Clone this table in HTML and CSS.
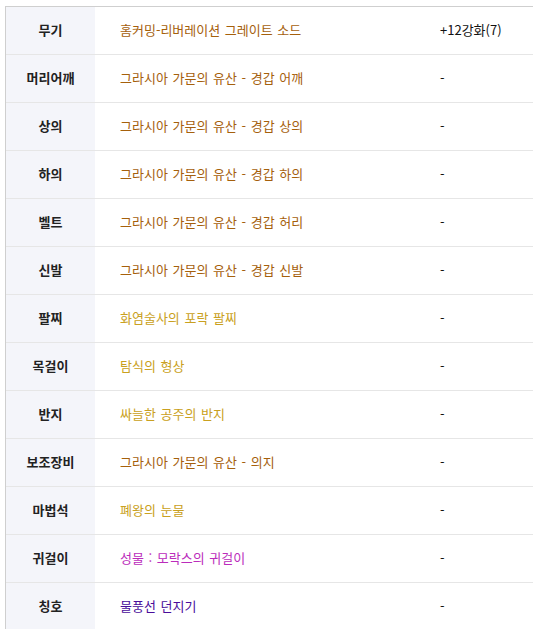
FILE: index.html
```html
<!DOCTYPE html>
<html lang="ko">
<head>
<meta charset="utf-8">
<link rel="stylesheet" href="styles.css">
</head>
<body>
<div class="equip">
  <div class="row"><div class="label">무기</div><div class="item brown">홈커밍-리버레이션 그레이트 소드</div><div class="enh">+12강화(7)</div></div>
  <div class="row"><div class="label">머리어깨</div><div class="item brown">그라시아 가문의 유산 - 경갑 어깨</div><div class="enh">-</div></div>
  <div class="row"><div class="label">상의</div><div class="item brown">그라시아 가문의 유산 - 경갑 상의</div><div class="enh">-</div></div>
  <div class="row"><div class="label">하의</div><div class="item brown">그라시아 가문의 유산 - 경갑 하의</div><div class="enh">-</div></div>
  <div class="row"><div class="label">벨트</div><div class="item brown">그라시아 가문의 유산 - 경갑 허리</div><div class="enh">-</div></div>
  <div class="row"><div class="label">신발</div><div class="item brown">그라시아 가문의 유산 - 경갑 신발</div><div class="enh">-</div></div>
  <div class="row"><div class="label">팔찌</div><div class="item gold">화염술사의 포락 팔찌</div><div class="enh">-</div></div>
  <div class="row"><div class="label">목걸이</div><div class="item gold">탐식의 형상</div><div class="enh">-</div></div>
  <div class="row"><div class="label">반지</div><div class="item gold">싸늘한 공주의 반지</div><div class="enh">-</div></div>
  <div class="row"><div class="label">보조장비</div><div class="item brown">그라시아 가문의 유산 - 의지</div><div class="enh">-</div></div>
  <div class="row"><div class="label">마법석</div><div class="item gold">폐왕의 눈물</div><div class="enh">-</div></div>
  <div class="row"><div class="label">귀걸이</div><div class="item magenta">성물 : 모락스의 귀걸이</div><div class="enh">-</div></div>
  <div class="row"><div class="label">칭호</div><div class="item purple">물풍선 던지기</div><div class="enh">-</div></div>
</div>
</body>
</html>
```
FILE: styles.css
```css
html, body {
  margin: 0;
  padding: 0;
  background: #fff;
}
body {
  padding: 6px 0 0 5px;
  font-family: "Noto Sans CJK KR", "Noto Sans", sans-serif;
  font-size: 13px;
  color: #222;
  overflow: hidden;
}
.equip {
  border-top: 1px solid #cfcfcf;
  border-left: 1px solid #cfcfcf;
}
.row {
  display: grid;
  grid-template-columns: 89px 320px 1fr;
  height: 47px;
  border-bottom: 1px solid #e6e6e6;
  align-items: stretch;
}
.label {
  background: #f4f5fa;
  font-weight: bold;
  color: #222;
  display: flex;
  align-items: center;
  justify-content: center;
  padding-bottom: 2px;
}
.item {
  padding-left: 25px;
  display: flex;
  align-items: center;
  padding-bottom: 2px;
  word-spacing: 1px;
}
.enh {
  padding-left: 25px;
  display: flex;
  align-items: center;
  color: #111;
  padding-bottom: 2px;
}
.brown { color: #a5600c; }
.gold { color: #c9a020; }
.magenta { color: #bb2cbb; }
.purple { color: #4a0d9a; }
```
